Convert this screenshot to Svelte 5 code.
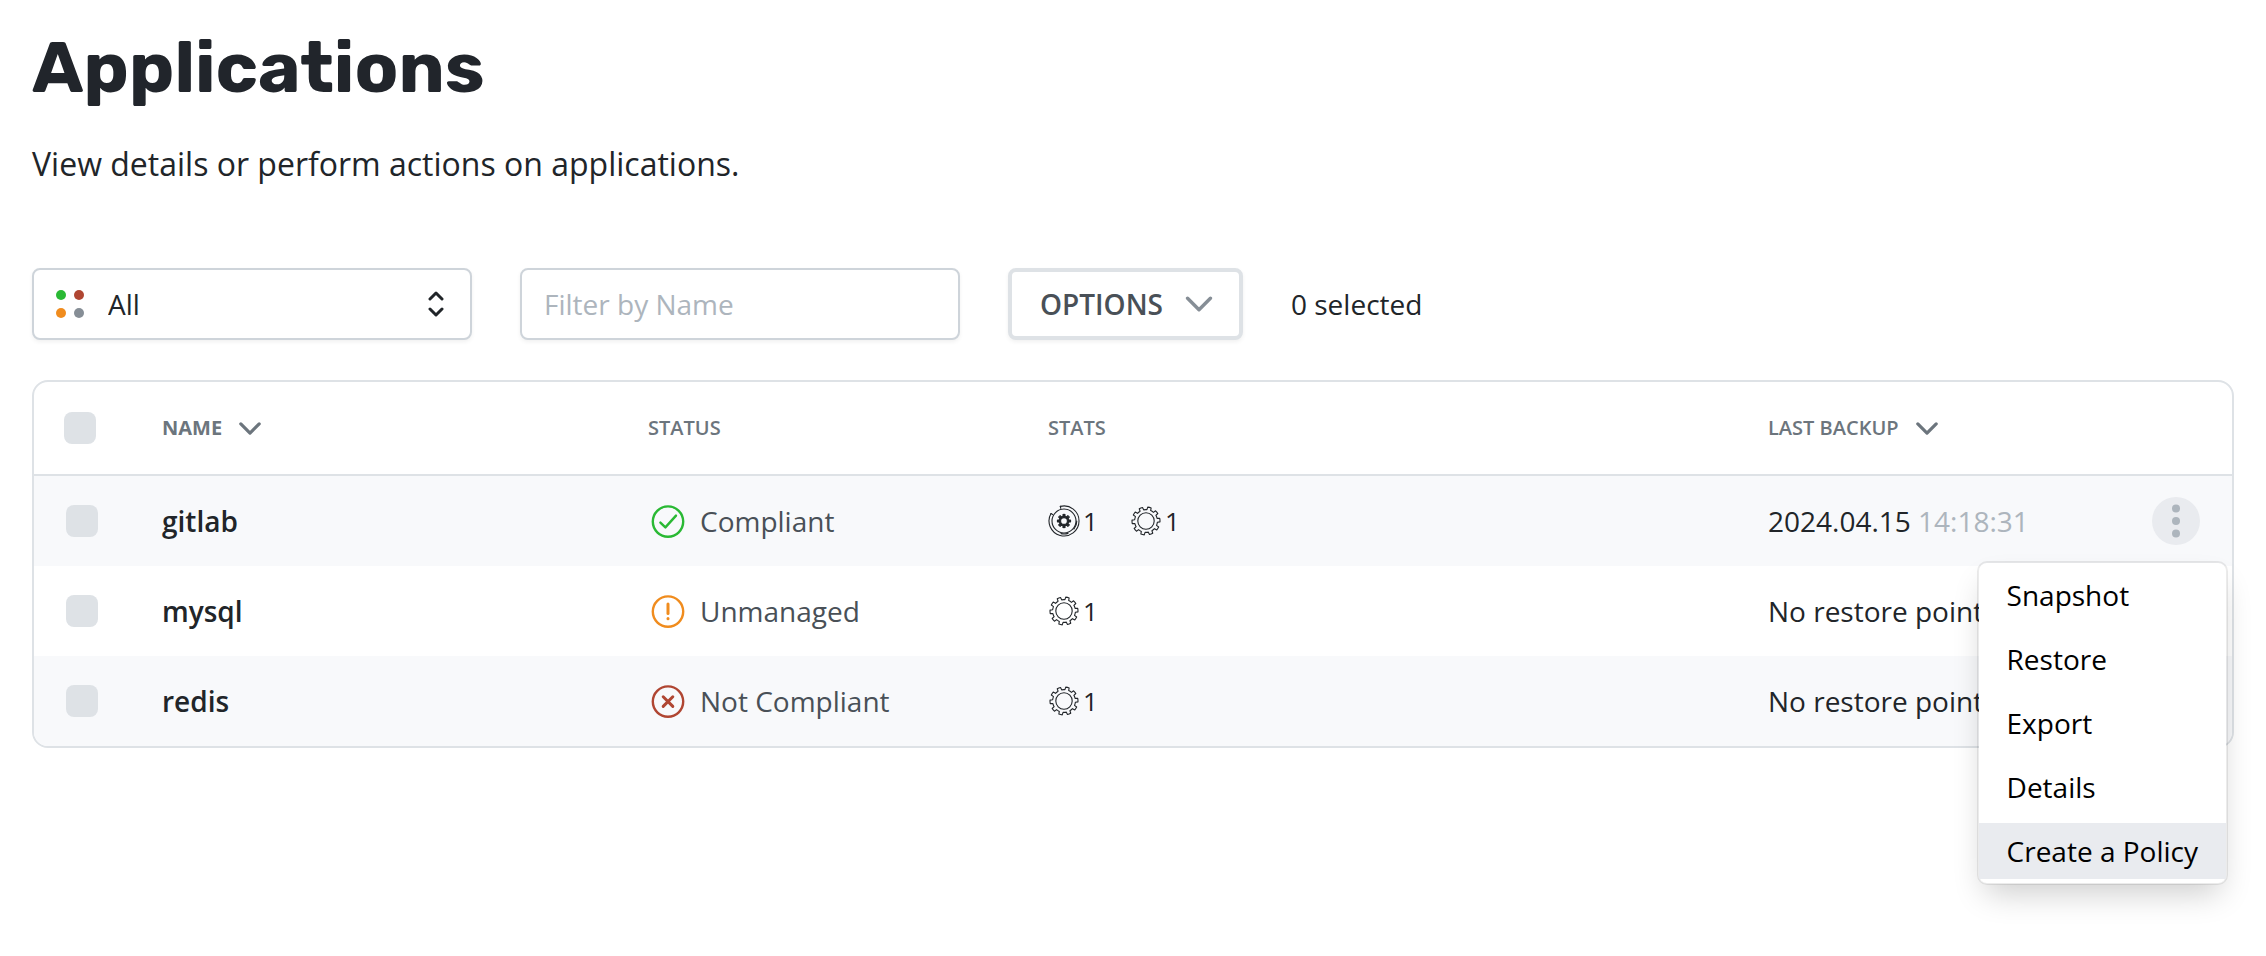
<script lang="ts">
  interface Application {
    name: string;
    status: 'ok' | 'warn' | 'bad';
    label: string;
    stats: { kind: 'config' | 'workload'; count: number }[];
    date?: string;
    time?: string;
  }

  const applications: Application[] = [
    {
      name: 'gitlab',
      status: 'ok',
      label: 'Compliant',
      stats: [{ kind: 'config', count: 1 }, { kind: 'workload', count: 1 }],
      date: '2024.04.15',
      time: '14:18:31'
    },
    { name: 'mysql', status: 'warn', label: 'Unmanaged', stats: [{ kind: 'workload', count: 1 }] },
    { name: 'redis', status: 'bad', label: 'Not Compliant', stats: [{ kind: 'workload', count: 1 }] }
  ];

  const actions = ['Snapshot', 'Restore', 'Export', 'Details', 'Create a Policy'];

  let filter = $state('');
  let selected = $state<string[]>([]);
  let openMenu = $state('gitlab');
  let activeAction = $state('Create a Policy');

  let visible = $derived(
    applications.filter((app) => app.name.includes(filter.trim().toLowerCase()))
  );

  function toggleAll(event: Event) {
    const checked = (event.currentTarget as HTMLInputElement).checked;
    selected = checked ? applications.map((app) => app.name) : [];
  }

  function toggleMenu(name: string) {
    openMenu = openMenu === name ? '' : name;
  }

  // Outline of a cog centred in a 32 x 32 box
  function cog(teeth: number, outer: number, inner: number, turn = 0) {
    const step = (Math.PI * 2) / teeth;
    const at = (r: number, a: number) =>
      `${(16 + r * Math.sin(a)).toFixed(2)} ${(16 - r * Math.cos(a)).toFixed(2)}`;
    let d = '';
    for (let i = 0; i < teeth; i++) {
      const a = (i + turn) * step;
      d += `${i ? 'L' : 'M'}${at(inner, a - step * 0.27)}L${at(outer, a - step * 0.2)}`;
      d += `A${outer} ${outer} 0 0 1 ${at(outer, a + step * 0.2)}L${at(inner, a + step * 0.27)}`;
      d += `A${inner} ${inner} 0 0 1 ${at(inner, a + step * 0.73)}`;
    }
    return d + 'Z';
  }

  const largeCog = cog(10, 14, 11.4, 0.4);
  const smallCog = cog(8, 6.6, 4.8);
</script>

{#snippet chevron()}
  <svg class="chevron" viewBox="0 0 24 14" aria-hidden="true">
    <path d="M2 2 L12 12 L22 2" />
  </svg>
{/snippet}

<main>
  <h1>Applications</h1>
  <p class="intro">View details or perform actions on applications.</p>

  <div class="toolbar">
    <div class="field">
      <svg class="dots" viewBox="0 0 28 28" aria-hidden="true">
        <circle cx="5" cy="5" r="5" fill="#2ab934" />
        <circle cx="23" cy="5" r="5" fill="#b04632" />
        <circle cx="5" cy="23" r="5" fill="#f08c1e" />
        <circle cx="23" cy="23" r="5" fill="#868e96" />
      </svg>
      <select aria-label="Status">
        <option>All</option>
        <option>Compliant</option>
        <option>Not Compliant</option>
        <option>Unmanaged</option>
      </select>
      <svg class="updown" viewBox="0 0 16 26" aria-hidden="true">
        <path d="M2 8 L8 2 L14 8 M2 18 L8 24 L14 18" />
      </svg>
    </div>

    <input class="field" type="text" placeholder="Filter by Name" aria-label="Filter by Name" bind:value={filter} />

    <button class="options" type="button">OPTIONS {@render chevron()}</button>
    <span>{selected.length} selected</span>
  </div>

  <table>
    <colgroup>
      <col class="col-check" />
      <col class="col-name" />
      <col class="col-status" />
      <col />
      <col class="col-backup" />
      <col class="col-actions" />
    </colgroup>
    <thead>
      <tr>
        <th class="check-all"><input type="checkbox" aria-label="Select all" onchange={toggleAll} /></th>
        <th><button class="sort active" type="button">NAME {@render chevron()}</button></th>
        <th>STATUS</th>
        <th>STATS</th>
        <th><button class="sort" type="button">LAST BACKUP {@render chevron()}</button></th>
        <th></th>
      </tr>
    </thead>
    <tbody>
      {#each visible as app}
        <tr>
          <td><input type="checkbox" aria-label="Select {app.name}" value={app.name} bind:group={selected} /></td>
          <td class="name">{app.name}</td>
          <td>
            <div class="status">
              <svg class={app.status} viewBox="0 0 40 40" aria-hidden="true">
                <circle cx="20" cy="20.6" r="15.2" />
                {#if app.status === 'ok'}
                  <path d="M12.4 21.6 L17.4 26.4 L28 14.6" />
                {:else if app.status === 'warn'}
                  <path d="M20 13 V22.4" />
                  <path d="M20 27.6 V27.8" />
                {:else}
                  <path d="M15.2 15.8 L24.8 25.4 M24.8 15.8 L15.2 25.4" />
                {/if}
              </svg>
              {app.label}
            </div>
          </td>
          <td>
            <div class="stats">
              {#each app.stats as stat}
                <span class="stat">
                  <svg viewBox="0 0 32 32" aria-hidden="true">
                    {#if stat.kind === 'config'}
                      <path d="M12.3 1.4 A15 15 0 1 1 3 8.5" />
                      <path d="M12.3 1.4 L12.8 3.4" />
                      <path d="M3 8.5 L4.6 9.4" />
                      <path d="M28.8 16 A12.8 12.8 0 0 1 26 24" />
                      <path d="M20 28.4 A13 13 0 0 1 13 28.6" />
                      <circle cx="16" cy="16" r="12" />
                      <path class="solid" d={smallCog} />
                      <circle class="hole" cx="16" cy="16" r="3.4" />
                    {:else}
                      <path d={largeCog} />
                      <circle cx="16" cy="16" r="8.2" />
                    {/if}
                  </svg>
                  {stat.count}
                </span>
              {/each}
            </div>
          </td>
          <td class="backup">
            {#if app.date}
              {app.date} <span class="time">{app.time}</span>
            {:else}
              No restore points
            {/if}
          </td>
          <td>
            <div class="actions" class:open={openMenu === app.name}>
              <button class="more" type="button" aria-label="Actions for {app.name}" onclick={() => toggleMenu(app.name)}>
                <svg viewBox="0 0 48 48" aria-hidden="true">
                  <circle cx="24" cy="11.5" r="4" />
                  <circle cx="24" cy="24" r="4" />
                  <circle cx="24" cy="36.5" r="4" />
                </svg>
              </button>
              {#if openMenu === app.name}
                <div class="menu" role="menu">
                  {#each actions as action}
                    <button
                      type="button"
                      role="menuitem"
                      class:active={activeAction === action}
                      onmouseenter={() => (activeAction = action)}
                    >{action}</button>
                  {/each}
                </div>
              {/if}
            </div>
          </td>
        </tr>
      {/each}
    </tbody>
  </table>
</main>

<style>
  :global(body) {
    margin: 0;
    background: #fff;
  }

  main {
    box-sizing: border-box;
    min-height: 100vh;
    padding: 24px 32px 32px;
    color: #212529;
    font-family: 'Open Sans', 'Noto Sans', sans-serif;
    font-size: 28px;
    line-height: 40px;
  }

  h1 {
    margin: 0;
    font-family: Rubik, Inter, Roboto, sans-serif;
    font-size: 72px;
    font-weight: 700;
    line-height: 88px;
    color: #21252b;
  }

  .intro {
    margin: 30px 0 82px;
    font-size: 32px;
    line-height: 44px;
  }

  button,
  input,
  select {
    font: inherit;
    color: inherit;
  }

  button {
    cursor: pointer;
  }

  svg {
    flex: none;
    fill: none;
    stroke-linecap: round;
    stroke-linejoin: round;
  }

  .toolbar {
    display: flex;
    align-items: center;
    gap: 48px;
    margin-bottom: 40px;
  }

  .field {
    display: flex;
    align-items: center;
    box-sizing: border-box;
    width: 440px;
    height: 72px;
    padding: 0 22px;
    border: 2px solid #ced4da;
    border-radius: 8px;
    background: #fff;
    box-shadow: 0 2px 4px rgba(0, 0, 0, 0.06);
  }

  .field::placeholder {
    color: #adb5bd;
    opacity: 1;
  }

  .dots {
    width: 28px;
    height: 28px;
  }

  select {
    flex: 1;
    appearance: none;
    padding: 0 24px;
    border: 0;
    background: none;
  }

  .updown {
    width: 16px;
    height: 26px;
    margin-right: 4px;
    stroke: #212529;
    stroke-width: 3;
  }

  .options {
    display: flex;
    align-items: center;
    gap: 22px;
    box-sizing: border-box;
    height: 72px;
    padding: 0 26px 0 28px;
    border: 4px solid #dee2e6;
    border-radius: 8px;
    background: #fff;
    color: #495057;
    font-weight: 600;
    box-shadow: 0 2px 4px rgba(0, 0, 0, 0.06);
  }

  .chevron {
    width: 22px;
    height: 13px;
    stroke: #6c757d;
    stroke-width: 3.5;
  }

  .options .chevron {
    width: 28px;
    height: 16px;
    stroke: #868e96;
    stroke-width: 3;
  }

  table {
    width: 100%;
    table-layout: fixed;
    border: 2px solid #dee2e6;
    border-radius: 16px;
    border-spacing: 0;
  }

  .col-check {
    width: 96px;
  }

  .col-name {
    width: 486px;
  }

  .col-status {
    width: 400px;
  }

  .col-backup {
    width: 384px;
  }

  .col-actions {
    width: 112px;
  }

  th,
  td {
    padding: 0 0 0 32px;
    text-align: left;
    vertical-align: middle;
  }

  th {
    height: 92px;
    border-bottom: 2px solid #dee2e6;
    color: #6c757d;
    font-size: 20px;
    font-weight: 600;
    line-height: 28px;
  }

  th.check-all {
    padding-left: 30px;
  }

  td {
    height: 90px;
    white-space: nowrap;
  }

  tbody tr:nth-child(odd) td {
    background: #f8f9fb;
  }

  tbody tr:last-child td:first-child {
    border-bottom-left-radius: 14px;
  }

  tbody tr:last-child td:last-child {
    border-bottom-right-radius: 14px;
  }

  input[type='checkbox'] {
    display: block;
    appearance: none;
    width: 32px;
    height: 32px;
    margin: 0;
    border-radius: 8px;
    background: #dee2e6;
  }

  input[type='checkbox']:checked {
    background: #868e96;
  }

  .sort {
    display: flex;
    align-items: center;
    gap: 17px;
    padding: 0;
    border: 0;
    background: none;
  }

  .sort.active {
    font-weight: 700;
  }

  .name {
    font-weight: 600;
  }

  .status {
    display: flex;
    align-items: center;
    gap: 12px;
    color: #495057;
  }

  .status svg {
    width: 40px;
    height: 40px;
    stroke-width: 2.4;
  }

  .ok {
    stroke: #2ab934;
  }

  .warn {
    stroke: #f08c1e;
  }

  .bad {
    stroke: #b04632;
  }

  .warn path,
  .bad path {
    stroke-width: 3;
  }

  .stats {
    display: flex;
    gap: 32px;
    font-size: 26px;
  }

  .stat {
    display: flex;
    align-items: center;
    gap: 3px;
  }

  .stat svg {
    width: 32px;
    height: 32px;
    stroke: #212529;
    stroke-width: 1.1;
  }

  .stat .solid {
    fill: #212529;
  }

  .stat .hole {
    fill: #f8f9fb;
  }

  .time {
    color: #adb5bd;
  }

  .actions {
    position: relative;
    width: 48px;
  }

  .more {
    display: block;
    width: 48px;
    height: 48px;
    padding: 0;
    border: 0;
    border-radius: 50%;
    background: #e9ebef;
    visibility: hidden;
  }

  .open .more,
  tr:hover .more {
    visibility: visible;
  }

  .more svg {
    display: block;
    fill: #adb5bd;
  }

  .menu {
    position: absolute;
    top: 64px;
    right: -28px;
    z-index: 1;
    display: flex;
    flex-direction: column;
    gap: 8px;
    padding: 4px 0;
    border: 2px solid rgba(0, 0, 0, 0.08);
    border-radius: 10px;
    background: #fff;
    background-clip: padding-box;
    box-shadow: 0 16px 32px -8px rgba(0, 0, 0, 0.2);
  }

  .menu button {
    height: 56px;
    padding: 0 28px;
    border: 0;
    background: none;
    color: #000;
    text-align: left;
    white-space: nowrap;
  }

  .menu .active {
    background: #e9ebef;
  }
</style>
